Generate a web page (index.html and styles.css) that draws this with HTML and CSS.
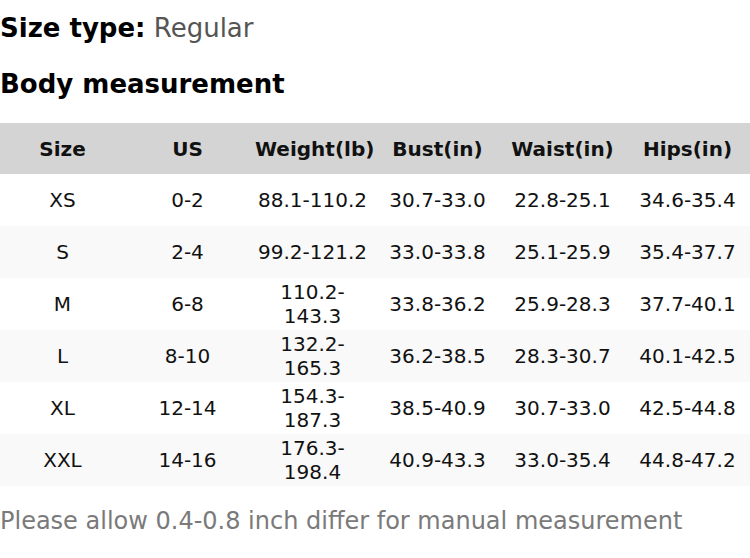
FILE: index.html
```html
<!DOCTYPE html>
<html>
<head>
<meta charset="utf-8">
<link rel="stylesheet" href="styles.css">
</head>
<body>
<div class="page">
  <p class="size-type"><strong>Size type:</strong> <span class="val">Regular</span></p>
  <h2 class="section">Body measurement</h2>
  <table class="chart">
    <thead>
      <tr><th>Size</th><th>US</th><th>Weight(lb)</th><th>Bust(in)</th><th>Waist(in)</th><th>Hips(in)</th></tr>
    </thead>
    <tbody>
      <tr><td>XS</td><td>0-2</td><td>88.1-110.2</td><td>30.7-33.0</td><td>22.8-25.1</td><td>34.6-35.4</td></tr>
      <tr><td>S</td><td>2-4</td><td>99.2-121.2</td><td>33.0-33.8</td><td>25.1-25.9</td><td>35.4-37.7</td></tr>
      <tr><td>M</td><td>6-8</td><td>110.2-143.3</td><td>33.8-36.2</td><td>25.9-28.3</td><td>37.7-40.1</td></tr>
      <tr><td>L</td><td>8-10</td><td>132.2-165.3</td><td>36.2-38.5</td><td>28.3-30.7</td><td>40.1-42.5</td></tr>
      <tr><td>XL</td><td>12-14</td><td>154.3-187.3</td><td>38.5-40.9</td><td>30.7-33.0</td><td>42.5-44.8</td></tr>
      <tr><td>XXL</td><td>14-16</td><td>176.3-198.4</td><td>40.9-43.3</td><td>33.0-35.4</td><td>44.8-47.2</td></tr>
    </tbody>
  </table>
  <p class="note">Please allow 0.4-0.8 inch differ for manual measurement</p>
</div>
</body>
</html>
```
FILE: styles.css
```css
html, body {
  margin: 0;
  padding: 0;
  background: #ffffff;
}
body {
  font-family: "DejaVu Sans", sans-serif;
  color: #000;
}
.page {
  width: 750px;
  padding-top: 13px;
}
.size-type {
  margin: 0;
  font-size: 26px;
  line-height: 30px;
}
.size-type strong {
  font-weight: bold;
  color: #000;
}
.size-type .val {
  color: #555555;
}
.section {
  margin: 26px 0 0 0;
  font-size: 26px;
  line-height: 30px;
  font-weight: bold;
}
.chart {
  margin-top: 24px;
  width: 750px;
  border-collapse: collapse;
  table-layout: fixed;
  font-size: 20px;
}
.chart th, .chart td {
  box-sizing: border-box;
  width: 125px;
  text-align: center;
  padding: 0 5px;
  line-height: 24px;
  vertical-align: middle;
}
.chart th {
  height: 51px;
  background: #d4d4d4;
  font-weight: bold;
  color: #111;
}
.chart td {
  height: 52px;
  color: #111;
}
.chart tbody tr:nth-child(even) td {
  background: #f9f9f9;
}
.note {
  margin: 21px 0 0 0;
  font-size: 24px;
  color: #7a7a7a;
}
```
